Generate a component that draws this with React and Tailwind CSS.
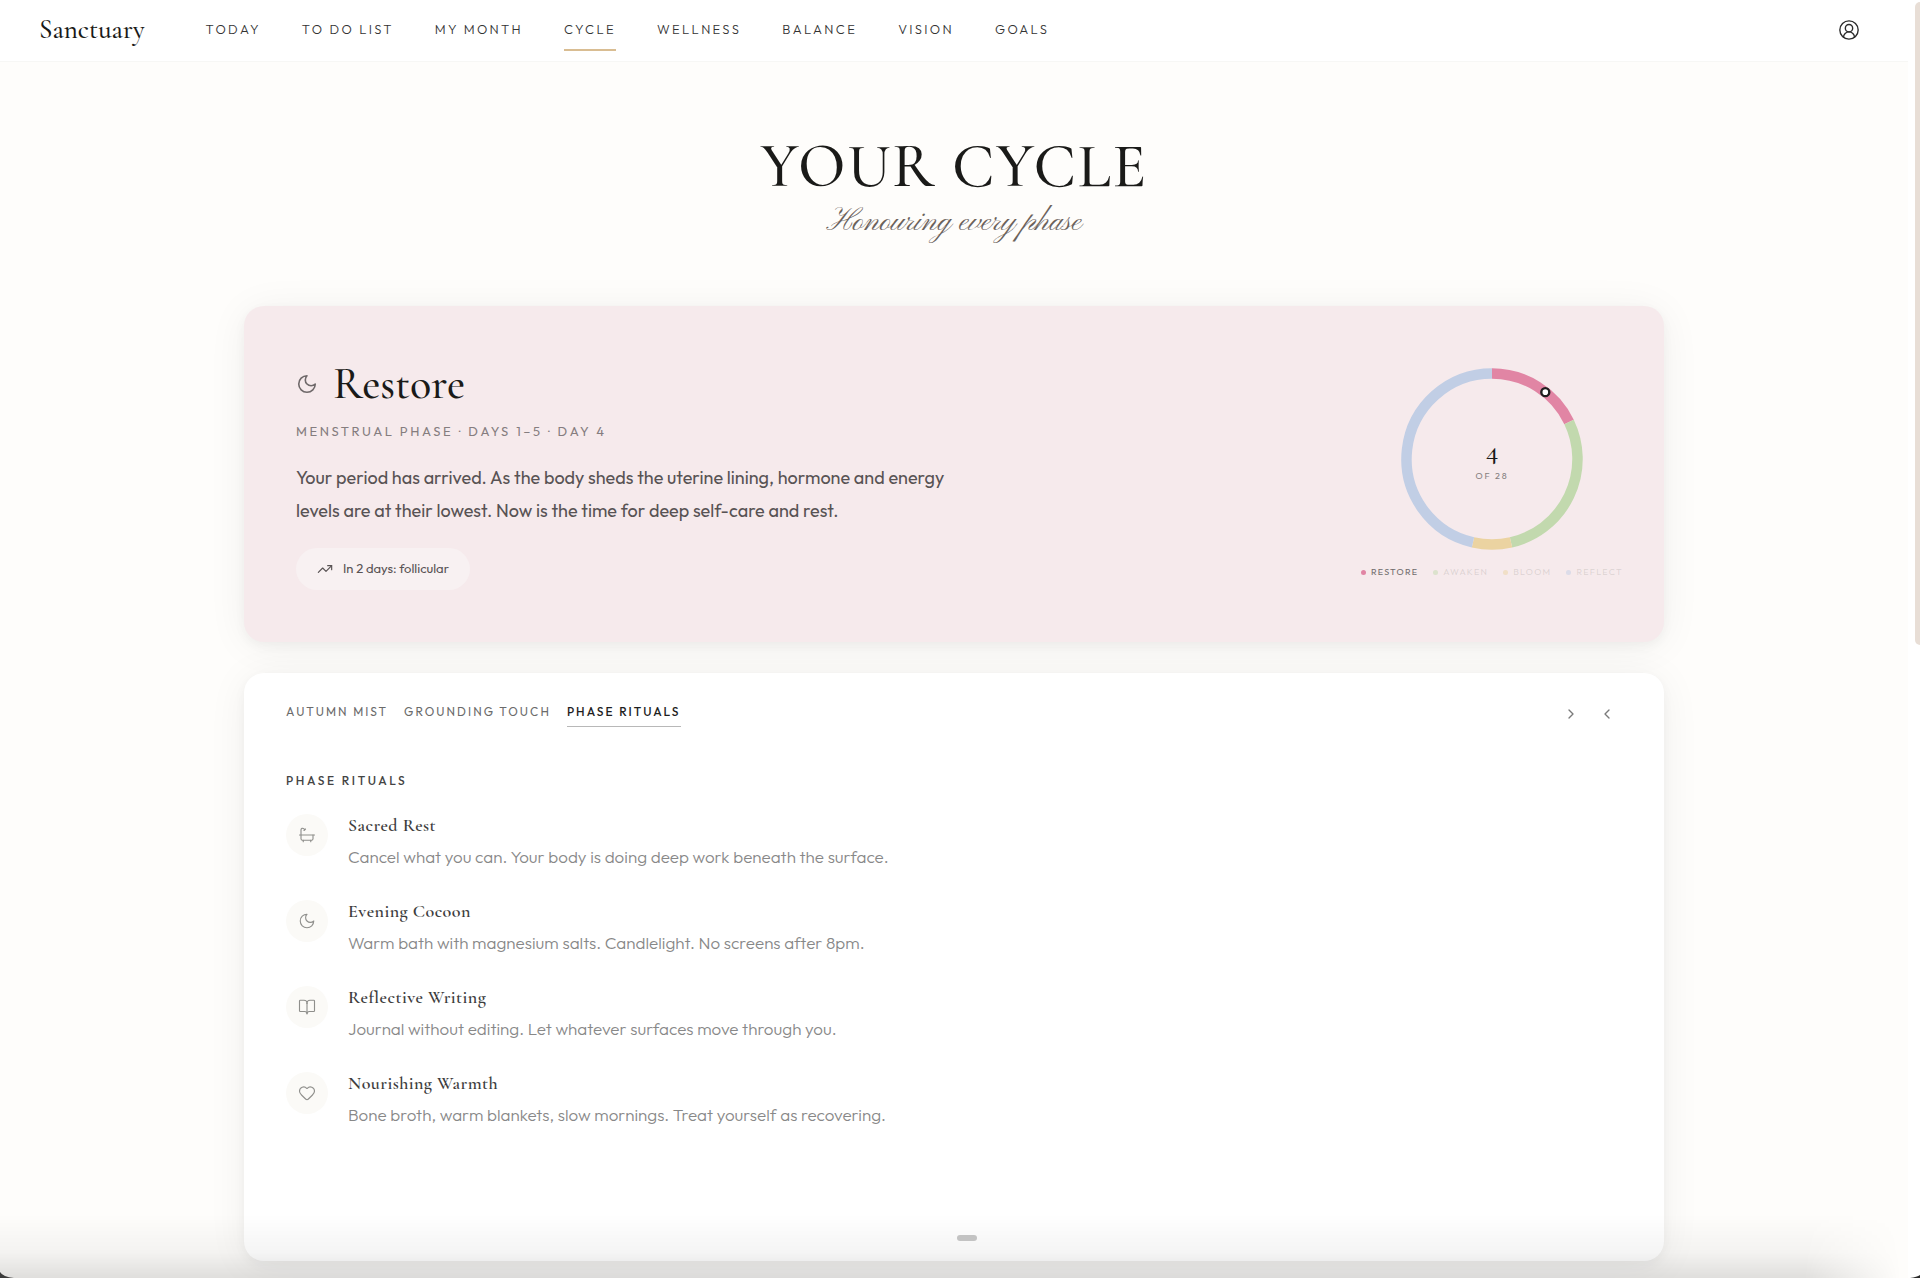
import { useState } from "react";
import { Bath, BookOpen, ChevronLeft, ChevronRight, CircleUserRound, Heart, TrendingUp } from "lucide-react";

const NAV_ITEMS = ["Today", "To Do List", "My Month", "Cycle", "Wellness", "Balance", "Vision", "Goals"];

const CYCLE_LENGTH = 28;
const CURRENT_DAY = 4;

const PHASES = [
  { name: "Restore", from: 0, to: 5, color: "#e185a4", dot: "bg-[#e185a4]" },
  { name: "Awaken", from: 5, to: 13, color: "#c2d9ae", dot: "bg-[#c2d9ae]" },
  { name: "Bloom", from: 13, to: 15, color: "#ebd3a1", dot: "bg-[#ebd3a1]" },
  { name: "Reflect", from: 15, to: 28, color: "#c1cee5", dot: "bg-[#c1cee5]" },
];

const TABS = ["Autumn Mist", "Grounding Touch", "Phase Rituals"];

const RITUALS = [
  { icon: Bath, title: "Sacred Rest", text: "Cancel what you can. Your body is doing deep work beneath the surface." },
  { icon: Moon, title: "Evening Cocoon", text: "Warm bath with magnesium salts. Candlelight. No screens after 8pm." },
  { icon: BookOpen, title: "Reflective Writing", text: "Journal without editing. Let whatever surfaces move through you." },
  { icon: Heart, title: "Nourishing Warmth", text: "Bone broth, warm blankets, slow mornings. Treat yourself as recovering." },
];

function Moon({ className, strokeWidth = 1.5 }) {
  return (
    <svg
      viewBox="0 0 24 24"
      fill="none"
      stroke="currentColor"
      strokeWidth={strokeWidth}
      strokeLinecap="round"
      strokeLinejoin="round"
      className={className}
      aria-hidden="true"
    >
      <path d="M12 3a6 6 0 0 0 9 9 9 9 0 1 1-9-9Z" />
    </svg>
  );
}

function pointAt(day, radius) {
  const angle = (day / CYCLE_LENGTH) * 2 * Math.PI;
  return [101 + radius * Math.sin(angle), 101 - radius * Math.cos(angle)];
}

function arcPath(from, to, radius) {
  const [x1, y1] = pointAt(from, radius);
  const [x2, y2] = pointAt(to, radius);
  const large = to - from > CYCLE_LENGTH / 2 ? 1 : 0;
  return `M ${x1} ${y1} A ${radius} ${radius} 0 ${large} 1 ${x2} ${y2}`;
}

function Header() {
  return (
    <header className="flex h-[62px] items-center border-b border-[#f7f7f5] bg-white pr-12 pb-[2px] pl-[39px]">
      <a
        href="#home"
        className="font-['Cormorant_Garamond','Liberation_Serif',serif] text-[27px] leading-8 font-medium text-[#1a1a18]"
      >
        Sanctuary
      </a>
      <nav className="ml-[61px] flex gap-[41px]">
        {NAV_ITEMS.map((item) => (
          <a
            key={item}
            href={`#${item.toLowerCase().replaceAll(" ", "-")}`}
            className={`border-b-2 pt-[11px] pb-[10px] text-[13px] leading-5 font-light tracking-[0.18em] uppercase text-[#333] ${
              item === "Cycle" ? "border-[#d9bd92]" : "border-transparent"
            }`}
          >
            {item}
          </a>
        ))}
      </nav>
      <button type="button" aria-label="Account" className="ml-auto text-[#2b2b2b]">
        <CircleUserRound className="size-[22px]" strokeWidth={1.5} />
      </button>
    </header>
  );
}

function CycleRing() {
  const [dotX, dotY] = pointAt(CURRENT_DAY - 1, 85.5);

  return (
    <div className="flex flex-col items-center">
      <div className="relative size-[202px]">
        <svg viewBox="0 0 202 202" className="size-full" aria-hidden="true">
          {PHASES.map((phase) => (
            <path
              key={phase.name}
              d={arcPath(phase.from, phase.to, 85.5)}
              fill="none"
              stroke={phase.color}
              strokeWidth="10.5"
            />
          ))}
          <circle cx={dotX} cy={dotY} r="4" fill="#fff" stroke="#1f1f1f" strokeWidth="2.4" />
        </svg>
        <div className="absolute inset-0 flex flex-col items-center justify-center gap-[6px]">
          <span className="font-['Cormorant_Garamond','Liberation_Serif',serif] text-[28px] leading-7 font-medium text-[#1a1a18]">
            {CURRENT_DAY}
          </span>
          <span className="text-[9px] leading-3 tracking-[0.2em] text-[#857f80]">OF {CYCLE_LENGTH}</span>
        </div>
      </div>
      <ul className="mt-[6px] flex gap-[15px]">
        {PHASES.map((phase, i) => (
          <li
            key={phase.name}
            className={`flex items-center gap-[5px] text-[9px] leading-3 tracking-[0.14em] uppercase ${
              i === 0 ? "text-[#6f6a6b]" : "text-[#6f6a6b]/20"
            }`}
          >
            <span className={`size-[5px] rounded-full ${phase.dot} ${i === 0 ? "" : "opacity-50"}`} />
            {phase.name}
          </li>
        ))}
      </ul>
    </div>
  );
}

function PhaseCard() {
  return (
    <section className="flex items-start justify-between rounded-[20px] bg-[#f6eaec] py-[52px] pr-[41px] pl-[52px] shadow-[0_4px_40px_rgba(0,0,0,0.06),0_4px_12px_rgba(0,0,0,0.04)]">
      <div>
        <div className="flex items-center gap-[15px]">
          <Moon className="size-[22px] text-[#6f696a]" strokeWidth={1.75} />
          <h2 className="font-['Cormorant_Garamond','Liberation_Serif',serif] text-[44px] leading-[52px] font-medium text-[#1a1a18]">
            Restore
          </h2>
        </div>
        <p className="mt-[10px] text-[13px] leading-[22px] tracking-[0.2em] uppercase text-[#857d7f]">
          Menstrual phase · Days 1–5 · Day {CURRENT_DAY}
        </p>
        <p className="mt-[19px] max-w-[670px] text-[18px] leading-[33px] text-[#585354]">
          Your period has arrived. As the body sheds the uterine lining, hormone and energy levels are at their lowest.
          Now is the time for deep self-care and rest.
        </p>
        <div className="mt-[21px] flex h-[42px] w-fit items-center gap-[10px] rounded-full bg-[#f8f1f2] px-[21px] text-[13px] text-[#585354]">
          <TrendingUp className="size-4" strokeWidth={1.75} />
          In 2 days: follicular
        </div>
      </div>
      <CycleRing />
    </section>
  );
}

function RitualsCard() {
  const [tab, setTab] = useState("Phase Rituals");

  return (
    <section className="mt-[31px] rounded-[20px] bg-white pt-[25px] pr-[41px] pb-[131px] pl-[42px] shadow-[0_4px_40px_rgba(0,0,0,0.06),0_4px_12px_rgba(0,0,0,0.04)]">
      <div className="flex items-start justify-between">
        <div className="flex gap-4">
          {TABS.map((name) => (
            <button
              key={name}
              type="button"
              onClick={() => setTab(name)}
              className={`border-b py-1 text-[12px] leading-5 tracking-[0.17em] uppercase ${
                tab === name ? "border-[#b8b8b8] font-medium text-[#1f1f1f]" : "border-transparent text-[#6b6b6b]"
              }`}
            >
              {name}
            </button>
          ))}
        </div>
        <div className="flex gap-1 text-[#7a7a7a]">
          <button type="button" aria-label="Next" className="p-2">
            <ChevronRight className="size-4" strokeWidth={2} />
          </button>
          <button type="button" aria-label="Previous" className="p-2">
            <ChevronLeft className="size-4" strokeWidth={2} />
          </button>
        </div>
      </div>

      <h3 className="mt-[41px] text-[12px] leading-5 font-medium tracking-[0.22em] uppercase text-[#444]">{tab}</h3>
      <ul className="mt-[23px] space-y-7">
        {RITUALS.map(({ icon: Icon, title, text }) => (
          <li key={title} className="flex gap-5">
            <span className="flex size-[42px] items-center justify-center rounded-full bg-[#fbfaf7] text-[#8f8f8c]">
              <Icon className="size-[18px]" strokeWidth={1.5} />
            </span>
            <div>
              <h4 className="font-['Cormorant_Garamond','Liberation_Serif',serif] text-[18px] leading-[22px] font-semibold tracking-wide text-[#3d3d3d]">
                {title}
              </h4>
              <p className="mt-[6px] text-[17px] leading-[30px] font-light text-[#888]">{text}</p>
            </div>
          </li>
        ))}
      </ul>
    </section>
  );
}

export default function App() {
  return (
    <div className="relative flex min-h-screen overflow-hidden bg-[#fefdfb] font-['Outfit','Lato',sans-serif]">
      <div className="flex-1">
        <Header />
        <main className="mx-auto max-w-[1420px] pb-4">
          <div className="pt-[69px] pb-[63px] text-center">
            <h1 className="font-['Cormorant_Garamond','Liberation_Serif',serif] text-[62px] leading-[72px] font-medium tracking-wide text-[#1a1a18] uppercase">
              Your Cycle
            </h1>
            <p className="font-['Pinyon_Script','Liberation_Serif',serif] text-[31px] leading-10 text-[#6b625b]">
              Honouring every phase
            </p>
          </div>
          <PhaseCard />
          <RitualsCard />
        </main>
      </div>

      {/* Scroll track */}
      <div className="flex w-3 justify-end bg-white pt-[2px]">
        <div className="h-[643px] w-[5px] rounded-l-md bg-[#e8ded6]" />
      </div>

      {/* Bottom fade and drag handle */}
      <div className="pointer-events-none absolute inset-x-0 bottom-0 h-16 bg-linear-to-t from-black/12 via-black/4 via-40% to-transparent [mask-image:linear-gradient(to_right,black_94%,transparent_99%)]" />
      <div className="absolute bottom-[37px] left-1/2 ml-[-3px] h-[6px] w-5 rounded-full bg-[#c3c3c3]" />

      {/* Window corners */}
      <svg viewBox="0 0 14 6" className="absolute bottom-0 left-0 h-[6px] w-[14px]" aria-hidden="true">
        <path d="M0 0Q3 5 14 6H0Z" fill="#3a3a3a" />
      </svg>
      <svg viewBox="0 0 10 3" className="absolute right-0 bottom-0 h-[3px] w-[10px]" aria-hidden="true">
        <path d="M10 0Q7 2 0 3H10Z" fill="#2a2a2a" />
      </svg>
    </div>
  );
}
